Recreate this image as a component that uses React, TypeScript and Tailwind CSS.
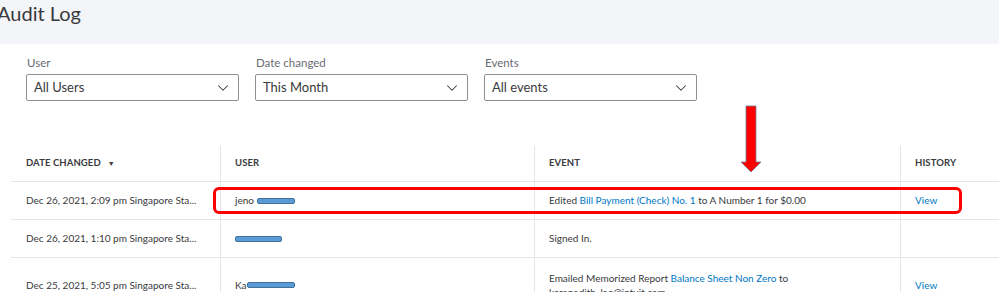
import { ChevronDown } from "lucide-react";

const filters = [
  { label: "User", value: "All Users" },
  { label: "Date changed", value: "This Month" },
  { label: "Events", value: "All events" },
];

// redacted name bar, as in the screenshot
const Redact = ({ w }: { w: number }) => (
  <span
    className="inline-block h-[6px] rounded-[2px] bg-[#5b9bd5] border border-[#41719c] align-middle"
    style={{ width: w }}
  />
);

export default function App() {
  return (
    <div className="relative w-[999px] h-[292px] overflow-hidden bg-white font-['Lato',sans-serif] text-[#393a3d]">
      {/* page header */}
      <div className="h-[44px] bg-[#f4f5f8]">
        <h1 className="-ml-[3px] text-[20px] leading-[26px]">Audit Log</h1>
      </div>

      {/* filters */}
      <div className="flex gap-[16px] pl-[26px] mt-[11px]">
        {filters.map((f) => (
          <div key={f.label} className="flex flex-col">
            <span className="text-[11.5px] leading-[16px] text-[#6b6c72] pl-[1px]">{f.label}</span>
            <div className="mt-[3px] w-[213px] h-[27px] border border-[#8d9096] rounded-[2px] flex items-center justify-between pl-[7px] pr-[6px]">
              <span className="text-[13px]">{f.value}</span>
              <ChevronDown size={18} strokeWidth={1.4} className="text-[#393a3d]" />
            </div>
          </div>
        ))}
      </div>

      {/* table */}
      <div className="ml-[11px] mt-[44px] text-[10px]">
        <div className="grid grid-cols-[209px_314px_366px_1fr] h-[37px] border-b border-[#e3e5e8] font-bold text-[9.5px] tracking-[0.1px] pt-[1px]">
          <div className="flex items-center pl-[15px] gap-[7px]">
            DATE CHANGED <span className="text-[7px]">▼</span>
          </div>
          <div className="flex items-center pl-[14px] border-l border-[#e3e5e8]">USER</div>
          <div className="flex items-center pl-[14px] border-l border-[#e3e5e8]">EVENT</div>
          <div className="flex items-center pl-[14px] border-l border-[#e3e5e8]">HISTORY</div>
        </div>

        <div className="grid grid-cols-[209px_314px_366px_1fr] h-[38px] border-b border-[#e3e5e8]">
          <div className="flex items-center pl-[15px]">Dec 26, 2021, 2:09 pm Singapore Sta...</div>
          <div className="flex items-center pl-[14px] border-l border-[#e3e5e8] gap-[3px]">
            jeno <Redact w={38} />
          </div>
          <div className="flex items-center pl-[14px] border-l border-[#e3e5e8]">
            <span>
              Edited <span className="text-[#0077c5]">Bill Payment (Check) No. 1</span> to A Number 1 for $0.00
            </span>
          </div>
          <div className="flex items-center pl-[14px] border-l border-[#e3e5e8] text-[#0077c5]">View</div>
        </div>

        <div className="grid grid-cols-[209px_314px_366px_1fr] h-[38px] border-b border-[#e3e5e8]">
          <div className="flex items-center pl-[15px]">Dec 26, 2021, 1:10 pm Singapore Sta...</div>
          <div className="flex items-center pl-[14px] border-l border-[#e3e5e8]">
            <Redact w={47} />
          </div>
          <div className="flex items-center pl-[14px] border-l border-[#e3e5e8]">Signed In.</div>
          <div className="border-l border-[#e3e5e8]" />
        </div>

        <div className="grid grid-cols-[209px_314px_366px_1fr] h-[54px]">
          <div className="flex items-center pl-[15px]">Dec 25, 2021, 5:05 pm Singapore Sta...</div>
          <div className="flex items-center pl-[14px] border-l border-[#e3e5e8]">
            Ka<Redact w={48} />
          </div>
          <div className="flex items-center pl-[14px] border-l border-[#e3e5e8]">
            <p className="w-[260px] leading-[14px]">
              Emailed Memorized Report <span className="text-[#0077c5]">Balance Sheet Non Zero</span> to
              karenedith_lao@intuit.com
            </p>
          </div>
          <div className="flex items-center pl-[14px] border-l border-[#e3e5e8] text-[#0077c5]">View</div>
        </div>
      </div>

      {/* annotation overlays */}
      <div className="absolute left-[213px] top-[187px] w-[749px] h-[27px] border-[3px] border-[#ff0000] rounded-[6px]" />
      <svg className="absolute left-[740px] top-[105px]" width="22" height="68" viewBox="0 0 22 68">
        <path d="M6 1 H16 V57 H21 L11 67 L1 57 H6 Z" fill="#ff0000" stroke="#6f7fa0" strokeWidth="0.8" />
      </svg>
    </div>
  );
}
